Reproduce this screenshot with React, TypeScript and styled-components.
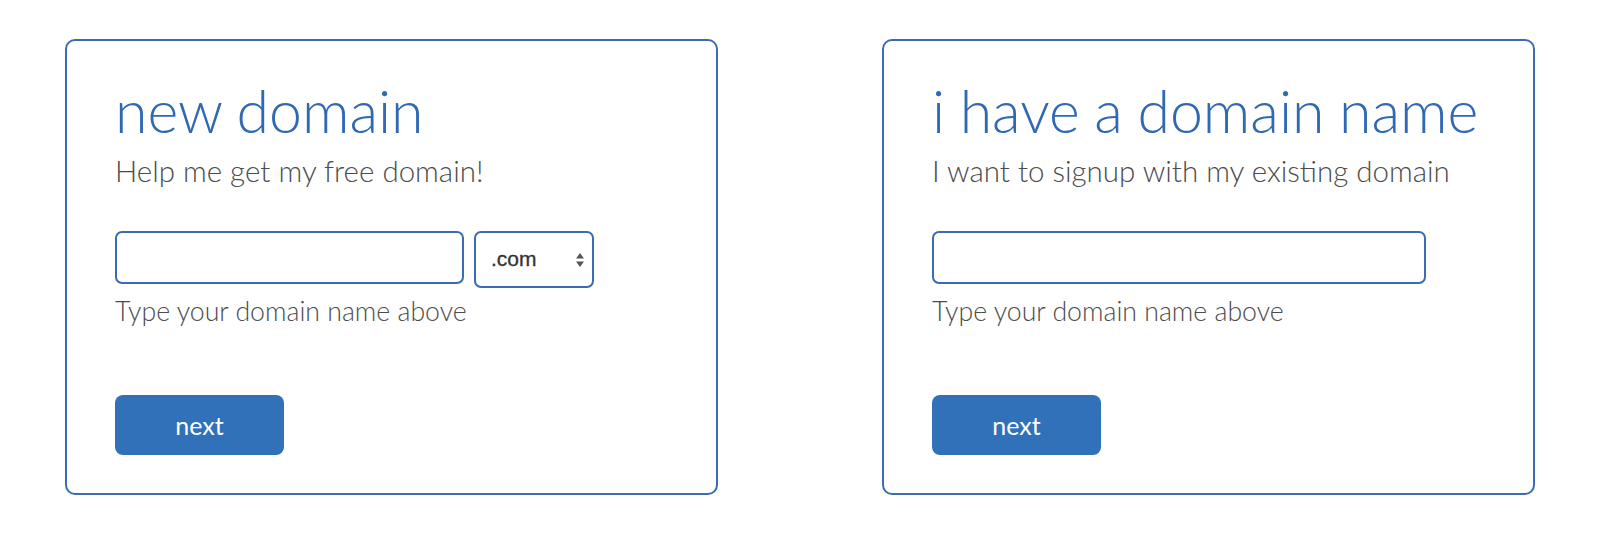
import React from "react";
import styled, { createGlobalStyle } from "styled-components";

const GlobalStyle = createGlobalStyle`
  html, body {
    margin: 0;
    padding: 0;
    background: #ffffff;
  }
  body {
    font-family: Lato, "Open Sans", sans-serif;
  }
`;

const Page = styled.div`
  display: flex;
  justify-content: space-between;
  padding: 39px 65px 0;
  box-sizing: border-box;
  width: 1600px;
  height: 536px;
  overflow: hidden;
`;

const Card = styled.section`
  box-sizing: border-box;
  width: 653px;
  height: 456px;
  border: 2px solid #3a6cb3;
  border-radius: 10px;
  padding: 38px 40px 0 48px;
  display: flex;
  flex-direction: column;
`;

const Title = styled.h2`
  margin: 0;
  font-family: Lato, sans-serif;
  font-weight: 300;
  font-size: 59px;
  line-height: 64px;
  word-spacing: -1.5px;
  white-space: nowrap;
  color: #2f68b4;
`;

const Subtitle = styled.p`
  margin: 10px 0 0;
  font-family: Lato, sans-serif;
  font-weight: 300;
  font-size: 29.5px;
  line-height: 36px;
  white-space: nowrap;
  color: #4c4c4c;
`;

const FieldRow = styled.div`
  display: flex;
  align-items: flex-start;
  gap: 10px;
  height: 55px;
  margin-top: 42px;
`;

const TextInput = styled.input<{ $w: number }>`
  box-sizing: border-box;
  flex: none;
  width: ${(p) => p.$w}px;
  height: 53px;
  border: 2px solid #3a6cb3;
  border-radius: 7px;
  background: #fff;
  padding: 0 12px;
  font-family: Lato, sans-serif;
  font-size: 22px;
  outline: none;
`;

const SelectWrap = styled.div`
  position: relative;
  flex: none;
  width: 120px;
  height: 57px;
`;

const Select = styled.select`
  appearance: none;
  -webkit-appearance: none;
  box-sizing: border-box;
  width: 100%;
  height: 100%;
  border: 2px solid #3a6cb3;
  border-radius: 7px;
  background: #fff;
  padding: 0 0 2px 15px;
  font-family: "Liberation Sans", Arial, sans-serif;
  font-weight: 400;
  font-size: 21px;
  color: #333333;
  -webkit-text-stroke: 0.3px #333333;
  outline: none;
`;

const Arrows = styled.svg`
  position: absolute;
  right: 9px;
  top: 50%;
  transform: translateY(-50%);
  pointer-events: none;
`;

const Hint = styled.p`
  margin: 8px 0 0;
  font-family: Lato, sans-serif;
  font-weight: 300;
  font-size: 26.7px;
  line-height: 34px;
  white-space: nowrap;
  color: #4c4c4c;
`;

const NextButton = styled.button`
  margin-top: 67px;
  box-sizing: border-box;
  width: 169px;
  height: 60px;
  border: none;
  border-radius: 8px;
  background: #3171b9;
  color: #ffffff;
  font-family: Lato, sans-serif;
  font-weight: 400;
  font-size: 25px;
  cursor: pointer;
  padding: 0;
`;

const SelectArrows = () => (
  <Arrows width="10" height="16" viewBox="0 0 10 16">
    <path d="M5 1 L9 6.5 L1 6.5 Z" fill="#555" />
    <path d="M5 15 L9 9.5 L1 9.5 Z" fill="#555" />
  </Arrows>
);

export default function App() {
  return (
    <>
      <GlobalStyle />
      <Page>
        <Card>
          <Title>new domain</Title>
          <Subtitle>Help me get my free domain!</Subtitle>
          <FieldRow>
            <TextInput $w={349} type="text" />
            <SelectWrap>
              <Select defaultValue=".com">
                <option>.com</option>
                <option>.net</option>
                <option>.org</option>
              </Select>
              <SelectArrows />
            </SelectWrap>
          </FieldRow>
          <Hint>Type your domain name above</Hint>
          <div>
            <NextButton>next</NextButton>
          </div>
        </Card>
        <Card>
          <Title>i have a domain name</Title>
          <Subtitle>I want to signup with my existing domain</Subtitle>
          <FieldRow>
            <TextInput $w={494} type="text" />
          </FieldRow>
          <Hint>Type your domain name above</Hint>
          <div>
            <NextButton>next</NextButton>
          </div>
        </Card>
      </Page>
    </>
  );
}
